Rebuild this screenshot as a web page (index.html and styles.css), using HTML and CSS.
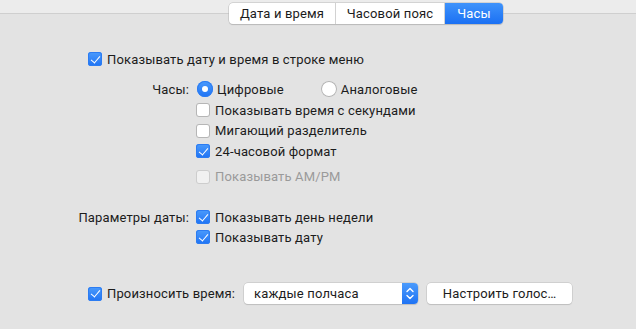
FILE: index.html
```html
<!DOCTYPE html>
<html lang="ru">
<head>
<meta charset="utf-8">
<link rel="stylesheet" href="styles.css">
</head>
<body>
<div class="band"></div>
<div class="tabs">
  <div class="tab">Дата и время</div>
  <div class="tab">Часовой пояс</div>
  <div class="tab active">Часы</div>
</div>

<div class="content">
  <div class="row first">
    <span class="cb on"></span><span class="lbl">Показывать дату и время в строке меню</span>
  </div>

  <div class="grid clock">
    <div class="key">Часы:</div>
    <div class="row radios">
      <span class="radio on"></span><span class="lbl">Цифровые</span>
      <span class="radio gap"></span><span class="lbl">Аналоговые</span>
    </div>
    <div></div>
    <div class="row"><span class="cb"></span><span class="lbl">Показывать время с секундами</span></div>
    <div></div>
    <div class="row"><span class="cb"></span><span class="lbl">Мигающий разделитель</span></div>
    <div></div>
    <div class="row"><span class="cb on"></span><span class="lbl">24-часовой формат</span></div>
    <div></div>
    <div class="row disabled ampm"><span class="cb"></span><span class="lbl">Показывать AM/PM</span></div>
  </div>

  <div class="grid date">
    <div class="key">Параметры даты:</div>
    <div class="row"><span class="cb on"></span><span class="lbl">Показывать день недели</span></div>
    <div></div>
    <div class="row"><span class="cb on"></span><span class="lbl">Показывать дату</span></div>
  </div>

  <div class="row speak">
    <span class="cb on"></span><span class="lbl">Произносить время:</span>
    <div class="popup"><span class="ptext">каждые полчаса</span><span class="arrows"><svg width="16" height="21" viewBox="0 0 16 21"><path d="M5 8.5 L8 5.5 L11 8.5" fill="none" stroke="#fff" stroke-width="1.4" stroke-linecap="round" stroke-linejoin="round"/><path d="M5 12.5 L8 15.5 L11 12.5" fill="none" stroke="#fff" stroke-width="1.4" stroke-linecap="round" stroke-linejoin="round"/></svg></span></div>
    <div class="btn">Настроить голос…</div>
  </div>
</div>
</body>
</html>
```

FILE: styles.css
```css
* { box-sizing: border-box; }
html, body { margin: 0; padding: 0; }
body {
  width: 636px;
  height: 329px;
  overflow: hidden;
  background: #e3e3e3;
  font-family: Roboto, "Liberation Sans", sans-serif;
  font-size: 13px;
  letter-spacing: 0.15px;
  color: #1c1c1c;
}
.band {
  height: 14px;
  background: #ececec;
  border-bottom: 1px solid #cfcfcf;
}
.tabs {
  display: flex;
  margin: -11px 0 0 229px;
  width: 274px;
  height: 21px;
  background: #fff;
  border-radius: 4px;
  box-shadow: 0 0 0 0.5px #b9b9b9, 0 1px 1px rgba(0,0,0,0.18);
  position: relative;
  overflow: hidden;
}
.tab {
  height: 21px;
  line-height: 21px;
  text-align: center;
  border-right: 1px solid #d2d2d2;
}
.tab:nth-child(1) { width: 107px; }
.tab:nth-child(2) { width: 109px; }
.tab.active {
  width: 58px;
  border-right: 0;
  color: #fff;
  background: linear-gradient(#3f93fb, #1b70f3);
}
.content { padding-top: 25px; }
.row {
  display: flex;
  align-items: center;
  height: 20px;
}
.first { padding-left: 88px; }
.lbl { margin-left: 5px; white-space: nowrap; }
.cb {
  flex: none;
  width: 14px;
  height: 14px;
  border-radius: 3px;
  background: #fff;
  box-shadow: inset 0 0 0 1px #b6b6b6;
  position: relative;
}
.cb.on {
  background: linear-gradient(#4b9bfc, #1f73f4);
  box-shadow: inset 0 0 0 1px #2c7cf2;
}
.cb.on::after {
  content: "";
  position: absolute;
  left: 4.5px;
  top: 1.5px;
  width: 4px;
  height: 8px;
  border: solid #fff;
  border-width: 0 1.6px 1.6px 0;
  transform: rotate(40deg);
}
.radio {
  flex: none;
  width: 16px;
  height: 16px;
  border-radius: 50%;
  background: #fff;
  box-shadow: inset 0 0 0 1px #b3b3b3;
  position: relative;
}
.radio.on {
  background: linear-gradient(#4b9bfc, #1f73f4);
  box-shadow: inset 0 0 0 1px #2c7cf2;
}
.radio.on::after {
  content: "";
  position: absolute;
  left: 5px;
  top: 5px;
  width: 6px;
  height: 6px;
  border-radius: 50%;
  background: #fff;
}
.radio.gap { margin-left: 37px; }
.grid {
  display: grid;
  grid-template-columns: 189px auto;
  column-gap: 7px;
  row-gap: 0;
  align-items: center;
}
.key { text-align: right; white-space: nowrap; }
.clock { margin-top: 10px; }
.clock .row { height: 20.5px; }
.clock .radios { height: 20px; margin-left: 1px; }
.clock .radios .lbl { margin-left: 4px; }
.clock .radios + div + .row { margin-top: 1px; }
.ampm { margin-top: 5px; }
.disabled .lbl { color: #9a9a9a; }
.disabled .cb { background: #f1f1f1; box-shadow: inset 0 0 0 1px #cdcdcd; }
.date { margin-top: 20px; }
.speak {
  margin-top: 36px;
  padding-left: 88px;
  height: 21px;
}
.popup {
  margin-left: 9px;
  width: 174px;
  height: 21px;
  display: flex;
  align-items: center;
  background: #fff;
  border-radius: 4px;
  box-shadow: 0 0 0 0.5px #bdbdbd, 0 1px 1px rgba(0,0,0,0.15);
  overflow: hidden;
}
.ptext { flex: 1; padding-left: 10px; }
.arrows {
  flex: none;
  width: 16px;
  height: 21px;
  background: linear-gradient(#4b9bfc, #1f73f4);
  display: flex;
}
.btn {
  margin-left: 9px;
  width: 145px;
  height: 21px;
  line-height: 21px;
  text-align: center;
  background: #fff;
  border-radius: 4px;
  box-shadow: 0 0 0 0.5px #bdbdbd, 0 1px 1px rgba(0,0,0,0.15);
}
```
